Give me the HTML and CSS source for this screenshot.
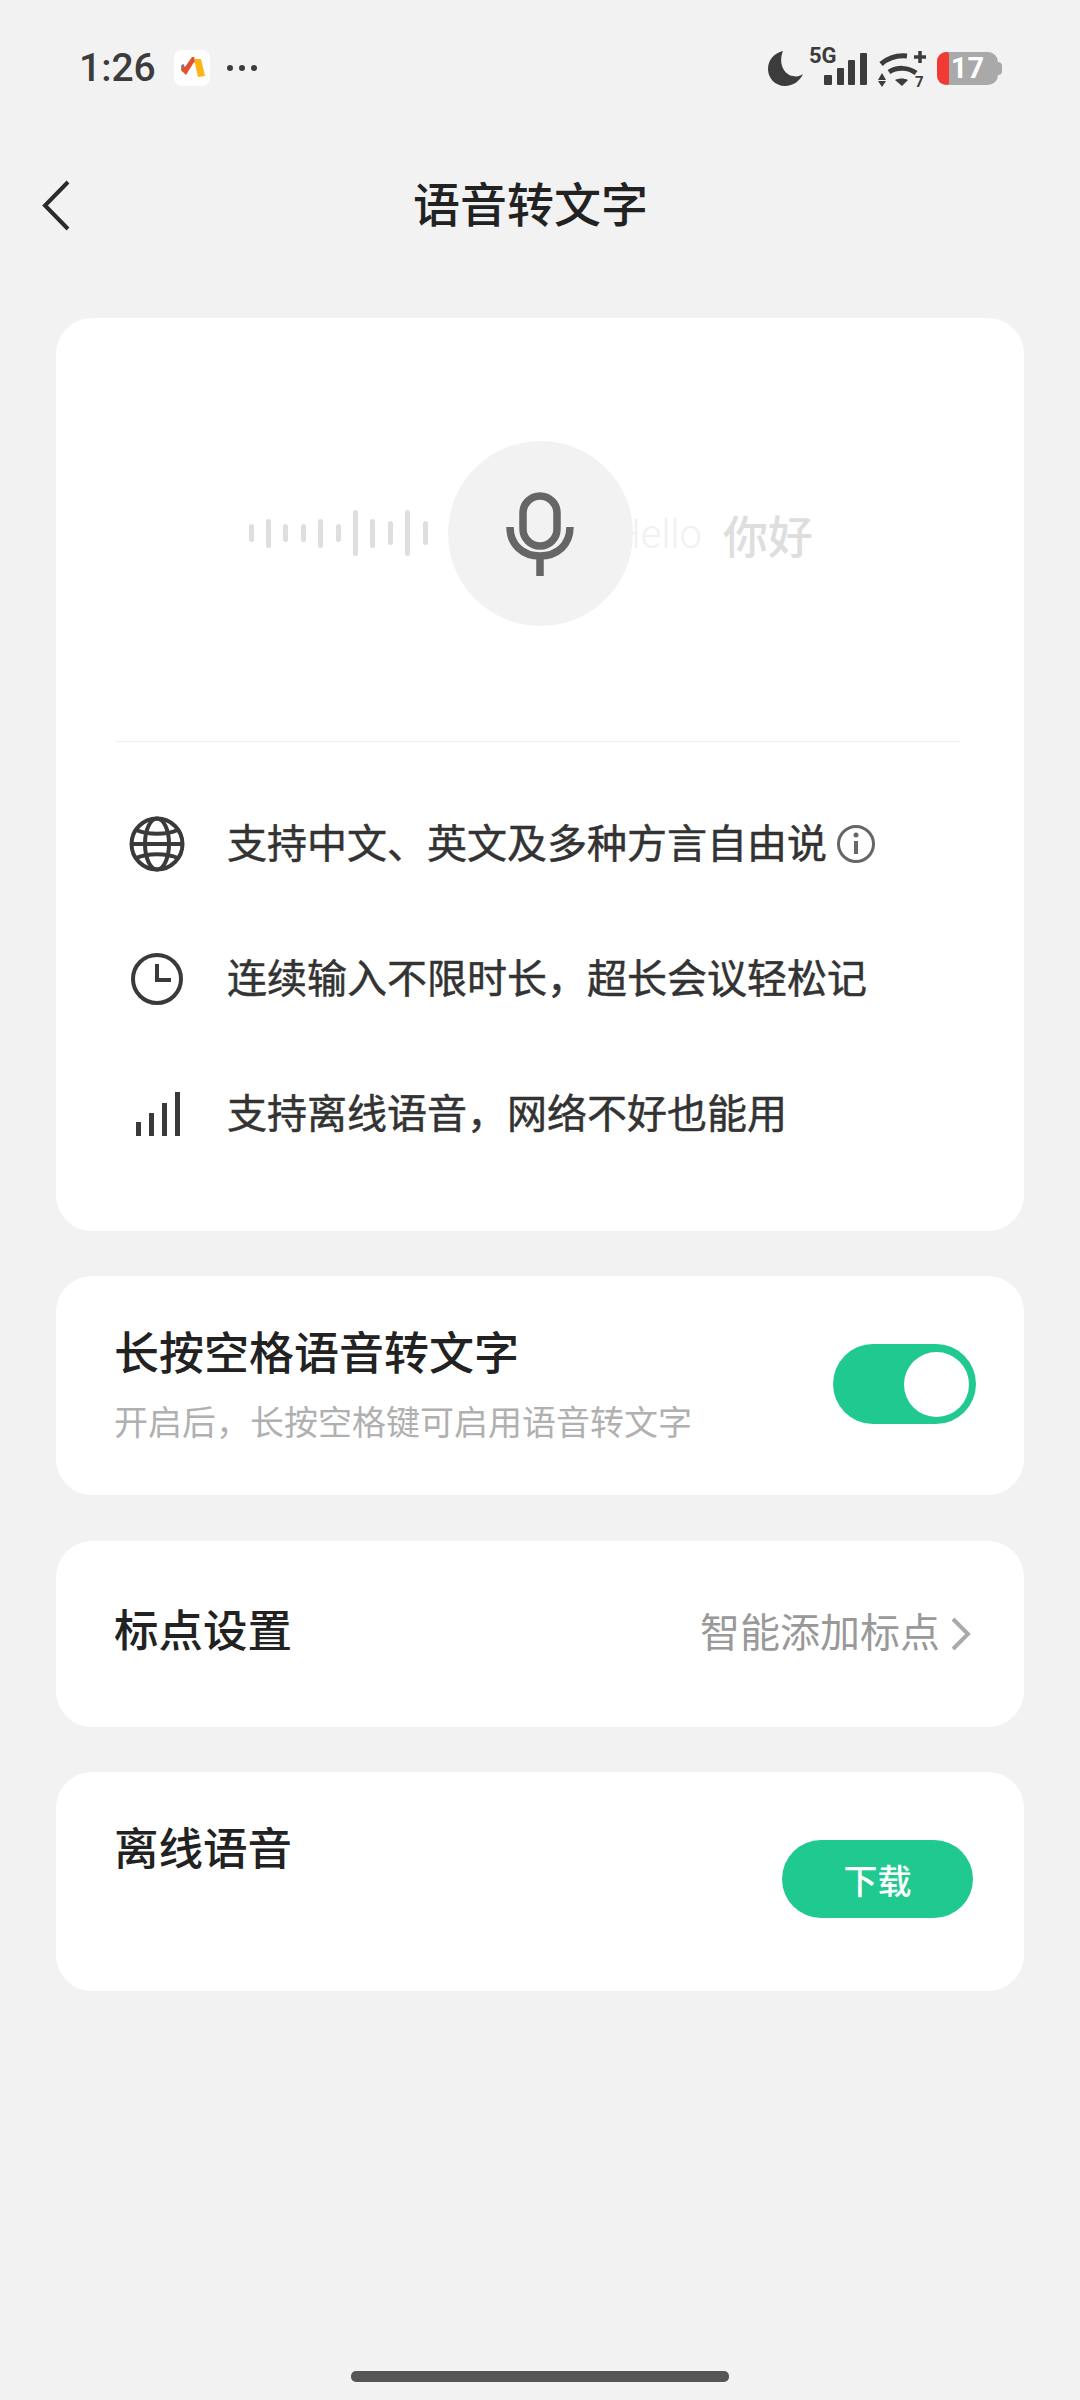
FILE: index.html
```html
<!DOCTYPE html>
<html lang="zh-CN">
<head>
    <meta charset="UTF-8">
    <meta name="viewport" content="width=device-width, initial-scale=1.0">
    <title>语音转文字</title>
    <link rel="stylesheet" href="styles.css">
</head>
<body>
    <div class="status_bar">
        <div class="status_left">
            <span class="status_time">1:26</span>
            <svg class="app_icon" width="36" height="36" viewBox="0 0 36 36">
                <rect width="36" height="36" rx="8" fill="#fff"/>
                <path d="M7 15l3-1 1 6-3 2z" fill="#4a9fd8"/>
                <path d="M7 20l5 5 8-13 3 3-3-8-2 0-7 10-3-2z" fill="#e2502e"/>
                <path d="M20 9h7l4 17-7 1z" fill="#fdb515"/>
            </svg>
            <svg class="more_dots" width="32" height="8" viewBox="0 0 32 8">
                <circle cx="3" cy="4" r="3" fill="#3c3c3c"/>
                <circle cx="15" cy="4" r="3" fill="#3c3c3c"/>
                <circle cx="27" cy="4" r="3" fill="#3c3c3c"/>
            </svg>
        </div>
        <div class="status_right">
            <svg width="36" height="36" viewBox="0 0 36 36">
                <path d="M15 1C6 3 0 10 0 19c0 9 7 17 17 17 8 0 15-5 18-12-3 2-6 3-10 2C16 25 10 13 15 1z" fill="#3c3c3c"/>
            </svg>
            <svg class="signal_icon" width="60" height="52" viewBox="0 0 60 52">
                <text x="0" y="21" class="signal_text">5G</text>
                <rect x="15" y="33" width="8" height="10" rx="1" fill="#3c3c3c"/>
                <rect x="28" y="26" width="7" height="17" rx="1" fill="#3c3c3c"/>
                <rect x="39" y="18" width="7" height="25" rx="1" fill="#3c3c3c"/>
                <rect x="51" y="11" width="7" height="32" rx="1" fill="#3c3c3c"/>
            </svg>
            <svg class="wifi_icon" width="48" height="46" viewBox="0 0 48 46">
                <g transform="translate(0 5)">
                    <path d="M3 14C10 8 19 5 29 6" fill="none" stroke="#3c3c3c" stroke-width="5"/>
                    <path d="M11 22c8-5 19-5 27 1" fill="none" stroke="#3c3c3c" stroke-width="5"/>
                    <path d="M17 30c4-2 9-2 13 0l-6 6z" fill="#3c3c3c"/>
                    <path d="M0 30l4-7 4 7zM0 31h8l-4 6z" fill="#3c3c3c"/>
                    <path d="M36 7h12M42 1v12" stroke="#3c3c3c" stroke-width="3.5"/>
                    <text x="37" y="37" class="wifi_text">7</text>
                </g>
            </svg>
            <div class="battery">
                <span class="battery_low"></span>
                <span class="battery_num">17</span>
                <span class="battery_cap"></span>
            </div>
        </div>
    </div>

    <header class="nav_bar">
        <svg class="back_icon" width="29" height="51" viewBox="0 0 29 51">
            <path d="M26 2L3 25.5 26 49" fill="none" stroke="#2b2b2b" stroke-width="4"/>
        </svg>
        <h1>语音转文字</h1>
    </header>

    <main class="content">
        <section class="card intro_card">
            <div class="hero">
                <div class="wave">
                    <i class="bar_s"></i><i class="bar_m"></i><i class="bar_s"></i><i class="bar_s"></i><i class="bar_m"></i><i class="bar_s"></i><i class="bar_l"></i><i class="bar_m"></i><i class="bar_r"></i><i class="bar_l"></i><i class="bar_r"></i>
                </div>
                <div class="mic_circle">
                    <svg width="68" height="84" viewBox="0 0 68 84">
                        <rect x="17" y="4" width="34" height="50" rx="17" fill="none" stroke="#666" stroke-width="7.5"/>
                        <path d="M4 35c0 18 13 29 30 29s30-11 30-29M34 64v20" fill="none" stroke="#666" stroke-width="7.5"/>
                    </svg>
                </div>
                <div class="hero_words">
                    <span class="hello">Hello</span>
                    <span class="nihao">你好</span>
                </div>
            </div>
            <div class="divider"></div>
            <ul class="feature_list">
                <li>
                    <svg width="56" height="56" viewBox="0 0 56 56" fill="none" stroke="#3a3a3a" stroke-width="4">
                        <circle cx="28" cy="28" r="25.5"/>
                        <ellipse cx="28" cy="28" rx="12" ry="25.5"/>
                        <path d="M2.5 28h51M7 14c12 5 30 5 42 0M7 42c12-5 30-5 42 0"/>
                    </svg>
                    <span class="feature_text">支持中文、英文及多种方言自由说</span>
                    <svg class="info_icon" width="40" height="40" viewBox="0 0 40 40" fill="none" stroke="#666" stroke-width="3">
                        <circle cx="20" cy="20" r="17.5"/>
                        <path d="M20 17v13" stroke-width="4"/>
                        <circle cx="20" cy="11" r="2.5" fill="#666" stroke="none"/>
                    </svg>
                </li>
                <li>
                    <svg width="56" height="56" viewBox="0 0 56 56" fill="none" stroke="#3a3a3a" stroke-width="4">
                        <circle cx="28" cy="28" r="24"/>
                        <path d="M28 13v16h14"/>
                    </svg>
                    <span class="feature_text">连续输入不限时长，超长会议轻松记</span>
                </li>
                <li>
                    <svg width="56" height="56" viewBox="0 0 56 56" fill="#3a3a3a">
                        <rect x="7" y="36" width="5" height="14"/>
                        <rect x="20" y="27" width="5" height="23"/>
                        <rect x="33" y="17" width="5" height="33"/>
                        <rect x="46" y="6" width="5" height="44"/>
                    </svg>
                    <span class="feature_text">支持离线语音，网络不好也能用</span>
                </li>
            </ul>
        </section>

        <section class="card switch_card">
            <div class="switch_text">
                <div class="card_title">长按空格语音转文字</div>
                <div class="card_sub">开启后，长按空格键可启用语音转文字</div>
            </div>
            <div class="toggle"><span class="knob"></span></div>
        </section>

        <section class="card punct_card">
            <div class="card_title">标点设置</div>
            <div class="punct_value">
                <span>智能添加标点</span>
                <svg width="22" height="34" viewBox="0 0 22 34">
                    <path d="M3 2l15 15L3 32" fill="none" stroke="#aaa" stroke-width="4"/>
                </svg>
            </div>
        </section>

        <section class="card offline_card">
            <div class="card_title">离线语音</div>
            <button class="download_btn">下载</button>
        </section>
    </main>

    <div class="home_bar"></div>
</body>
</html>
```

FILE: styles.css
```css
* {
    box-sizing: border-box;
}

body {
    margin: 0;
    width: 1080px;
    height: 2400px;
    overflow: hidden;
    display: flex;
    flex-direction: column;
    background: #f2f2f2;
    color: #222;
    font-family: "Noto Sans CJK SC", "Noto Sans", sans-serif;
}

/* status bar */
.status_bar {
    height: 136px;
    padding: 0 82px 0 79px;
    display: flex;
    align-items: center;
    justify-content: space-between;
}

.status_left {
    display: flex;
    align-items: center;
}

.status_time {
    font-family: Roboto, sans-serif;
    font-size: 39px;
    font-weight: 500;
    line-height: 46px;
    color: #3c3c3c;
}

.app_icon {
    margin-left: 18px;
}

.more_dots {
    margin-left: 17px;
}

.status_right {
    display: flex;
    align-items: center;
}

.signal_icon {
    margin-left: 5px;
}

.signal_text {
    font-family: Roboto, sans-serif;
    font-size: 22px;
    font-weight: 700;
    fill: #3c3c3c;
}

.wifi_icon {
    margin-left: 9px;
}

.wifi_text {
    font-family: Roboto, sans-serif;
    font-size: 15px;
    font-weight: 700;
    fill: #3c3c3c;
}

.battery {
    position: relative;
    width: 61px;
    height: 33px;
    margin-left: 11px;
    border-radius: 10px;
    background: #a9a9a9;
    display: flex;
    align-items: center;
    justify-content: center;
}

.battery_low {
    position: absolute;
    left: 0;
    top: 0;
    bottom: 0;
    width: 12px;
    background: #f03a33;
    border-radius: 10px 3px 3px 10px;
}

.battery_num {
    position: relative;
    font-family: Roboto, sans-serif;
    font-size: 29px;
    font-weight: 700;
    line-height: 33px;
    color: #fff;
}

.battery_cap {
    position: absolute;
    right: -4px;
    top: 10px;
    width: 4px;
    height: 13px;
    border-radius: 0 4px 4px 0;
    background: #a9a9a9;
}

/* nav */
.nav_bar {
    position: relative;
    height: 138px;
    padding-bottom: 6px;
    display: flex;
    align-items: center;
    justify-content: center;
}

.nav_bar h1 {
    margin: 0 0 0 -19px;
    font-size: 47px;
    font-weight: 500;
    line-height: 60px;
    color: #222;
}

.back_icon {
    position: absolute;
    left: 42px;
    top: 44px;
}

/* cards */
.content {
    padding: 44px 56px 0;
    display: flex;
    flex-direction: column;
    gap: 45px;
}

.card {
    background: #fff;
    border-radius: 36px;
}

.intro_card {
    height: 913px;
    padding: 0 60px;
}

.hero {
    height: 423px;
    padding-top: 123px;
    display: grid;
    grid-template-columns: 1fr 185px 1fr;
    align-items: start;
}

.wave {
    height: 184px;
    padding-right: 20px;
    display: flex;
    align-items: center;
    justify-content: flex-end;
    gap: 12.4px;
}

.wave i {
    width: 5px;
    border-radius: 3px;
    background: #dedede;
}

.bar_s { height: 18px; }
.bar_r { height: 24px; }
.bar_m { height: 29px; }
.bar_l { height: 46px; }

.mic_circle {
    position: relative;
    width: 185px;
    height: 185px;
    border-radius: 50%;
    background: #f2f2f2;
    display: flex;
    align-items: center;
    justify-content: center;
}

.hero_words {
    height: 184px;
    margin-left: -20px;
    padding-top: 3px;
    display: flex;
    align-items: center;
    gap: 21px;
}

.hello {
    font-family: Roboto, sans-serif;
    font-size: 40px;
    font-weight: 300;
    line-height: 46px;
    color: #f1f1f1;
}

.nihao {
    font-size: 45px;
    font-weight: 500;
    line-height: 60px;
    color: #dedede;
}

.divider {
    height: 1px;
    margin-right: 3px;
    background: #f0f0f0;
}

.feature_list {
    margin: 0;
    padding: 34px 0 0 13px;
    list-style: none;
}

.feature_list li {
    height: 135px;
    display: flex;
    align-items: center;
    gap: 42px;
    font-size: 40px;
    line-height: 56px;
    color: #333;
}

/* a bit heavier than regular, lighter than medium */
.feature_text {
    padding-bottom: 6px;
    -webkit-text-stroke: 0.5px #333;
}

.feature_list .info_icon {
    margin-left: -33px;
}

.switch_card {
    height: 219px;
    padding: 0 48px 0 58px;
    display: flex;
    align-items: center;
    justify-content: space-between;
}

.switch_text {
    padding-bottom: 7px;
}

.switch_text .card_title {
    font-size: 45px;
}

.card_title {
    font-size: 44.5px;
    font-weight: 500;
    line-height: 60px;
    color: #222;
}

.card_sub {
    margin-top: 17px;
    font-size: 34px;
    line-height: 46px;
    color: #b0b0b0;
}

.toggle {
    width: 143px;
    height: 80px;
    margin-bottom: 4px;
    padding: 8px 7px;
    border-radius: 40px;
    background: #20c98f;
    display: flex;
    justify-content: flex-end;
}

.knob {
    width: 65px;
    height: 65px;
    border-radius: 50%;
    background: #fff;
}

.punct_card {
    height: 186px;
    margin-top: 1px;
    padding: 0 52px 0 58px;
    display: flex;
    align-items: center;
    justify-content: space-between;
}

.punct_card .card_title {
    padding-bottom: 12px;
}

.punct_value {
    display: flex;
    align-items: center;
    gap: 10px;
    font-size: 40px;
    line-height: 56px;
    color: #999;
}

.punct_value span {
    padding-bottom: 8px;
}

.offline_card {
    height: 219px;
    padding: 44px 51px 0 58px;
    display: flex;
    justify-content: space-between;
}

.download_btn {
    width: 191px;
    height: 78px;
    margin-top: 24px;
    border: none;
    border-radius: 39px;
    background: #20c98f;
    color: #fff;
    font-family: inherit;
    font-size: 34px;
    font-weight: 500;
}

.home_bar {
    position: absolute;
    left: 351px;
    top: 2371px;
    width: 378px;
    height: 11px;
    border-radius: 5px;
    background: #555;
}
```
